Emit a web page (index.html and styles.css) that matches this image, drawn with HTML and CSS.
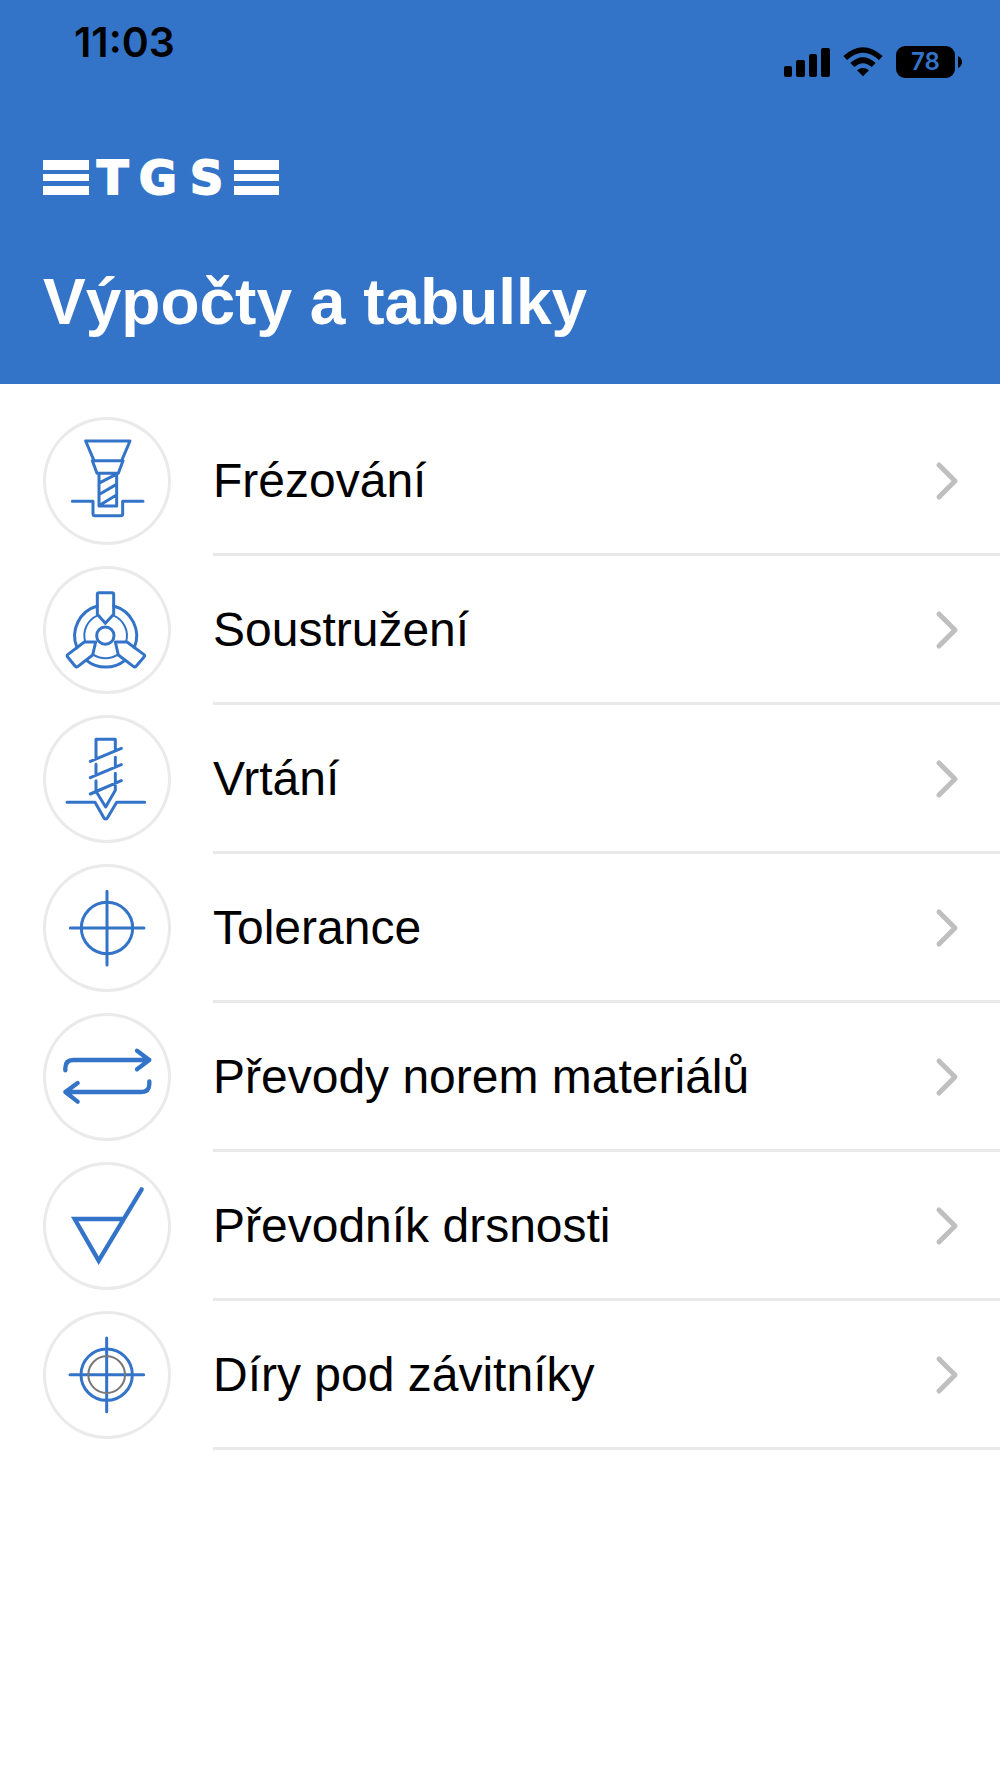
FILE: index.html
```html
<!DOCTYPE html>
<html lang="cs">
<head>
<meta charset="utf-8">
<meta name="viewport" content="width=device-width, initial-scale=1">
<title>Výpočty a tabulky</title>
<link rel="stylesheet" href="styles.css">
</head>
<body>
<header class="header">
  <div class="status">
    <time class="clock">11:03</time>
    <div class="indicators">
      <svg class="signal" viewBox="0 0 46 30" aria-hidden="true">
        <rect x="0" y="19" width="8" height="11" rx="2"/>
        <rect x="12" y="13" width="9" height="17" rx="2"/>
        <rect x="25" y="7" width="8" height="23" rx="2"/>
        <rect x="37" y="1" width="9" height="29" rx="2"/>
      </svg>
      <svg class="wifi" viewBox="0 0 120 90" aria-hidden="true">
        <path d="M1 27Q60 -26 119 27L108 39Q60 -5 12 39Z"/>
        <path d="M22 48Q60 14 98 48L86 60Q60 37 34 60Z"/>
        <path d="M42 70Q60 56 78 70L60 88Z"/>
      </svg>
      <div class="battery"><span class="battery-level">78</span>
        <svg class="battery-tip" viewBox="0 0 4 12" aria-hidden="true"><path d="M0 0Q4 2 4 6T0 12Z"/></svg>
      </div>
    </div>
  </div>
  <svg class="logo" viewBox="0 0 237 36" role="img" aria-label="TGS">
    <path d="M0 0H46V10H0ZM0 14H46V21H0ZM0 26H46V35H0ZM191 0H236V10H191ZM191 14H236V21H191ZM191 26H236V35H191Z"/>
    <text class="logo-text" y="34" x="54 96 147">TGS</text>
  </svg>
  <h1 class="title">Výpočty a tabulky</h1>
</header>
<main>
  <ul class="menu">
    <li><a class="row" href="#frezovani">
      <span class="badge"><svg class="icon" viewBox="21 22 384 384" aria-hidden="true">
        <path d="M149 94H282L257 153H174ZM169 153L183 191H247L261 153M189 191V289H242V191M192 219L240 194M192 253L240 225M192 286L240 257M109 275H171V312Q171 318 177 318H254Q260 318 260 312V275H321"/>
      </svg></span>
      <span class="body"><span class="label">Frézování</span><svg class="chevron" viewBox="0 0 20 36" aria-hidden="true"><path d="M2 2L18 18L2 34"/></svg></span>
    </a></li>
    <li><a class="row" href="#soustruzeni">
      <span class="badge"><svg class="icon" viewBox="21 19 384 384" aria-hidden="true">
        <circle cx="208" cy="228" r="26"/>
        <path d="M189 99H228Q233 99 233 104V164L208 191L184 164V104Q184 99 189 99Z"/>
        <path d="M145 247H179L170 286L126 320Q121 324 117 319L95 292Q91 288 96 284Z"/>
        <path d="M273 247H238L247 286L292 320Q297 324 301 319L324 292Q328 288 323 284Z"/>
        <path d="M184 139A93 93 0 0 0 123 264M233 139A93 93 0 0 1 295 264M151 302A93 93 0 0 0 267 302"/>
        <path class="thin" d="M184 168A65 65 0 0 0 148 247M233 168A65 65 0 0 1 270 247M170 284A70 70 0 0 0 247 284"/>
      </svg></span>
      <span class="body"><span class="label">Soustružení</span><svg class="chevron" viewBox="0 0 20 36" aria-hidden="true"><path d="M2 2L18 18L2 34"/></svg></span>
    </a></li>
    <li><a class="row" href="#vrtani">
      <span class="badge"><svg class="icon" viewBox="21 17 384 384" aria-hidden="true">
        <path d="M180 149V90H238V123M163 156L256 117M180 165V197M238 144V173M163 205L256 166M180 214V246L209 293L238 243V192M163 254L256 214M93 279H177L204 326Q209 332 214 326L242 279H326"/>
      </svg></span>
      <span class="body"><span class="label">Vrtání</span><svg class="chevron" viewBox="0 0 20 36" aria-hidden="true"><path d="M2 2L18 18L2 34"/></svg></span>
    </a></li>
    <li><a class="row" href="#tolerance">
      <span class="badge"><svg class="icon" viewBox="21 15 384 384" aria-hidden="true">
        <circle cx="213" cy="207" r="77"/><path d="M103 207H324M213 97V318"/>
      </svg></span>
      <span class="body"><span class="label">Tolerance</span><svg class="chevron" viewBox="0 0 20 36" aria-hidden="true"><path d="M2 2L18 18L2 34"/></svg></span>
    </a></li>
    <li><a class="row" href="#prevody">
      <span class="badge"><svg class="icon bold" viewBox="21 13 384 384" aria-hidden="true">
        <path d="M88 185V178Q88 154 112 154H340M303 126L340 154L303 182M340 218V226Q340 250 316 250H88M125 223L88 250L125 279"/>
      </svg></span>
      <span class="body"><span class="label">Převody norem materiálů</span><svg class="chevron" viewBox="0 0 20 36" aria-hidden="true"><path d="M2 2L18 18L2 34"/></svg></span>
    </a></li>
    <li><a class="row" href="#drsnost">
      <span class="badge"><svg class="icon bold miter" viewBox="21 11 384 384" aria-hidden="true">
        <path d="M317 93L188 307L116 182H262"/>
      </svg></span>
      <span class="body"><span class="label">Převodník drsnosti</span><svg class="chevron" viewBox="0 0 20 36" aria-hidden="true"><path d="M2 2L18 18L2 34"/></svg></span>
    </a></li>
    <li><a class="row" href="#zavitniky">
      <span class="badge"><svg class="icon" viewBox="21 9 384 384" aria-hidden="true">
        <circle cx="212" cy="200" r="77"/><path d="M102 200H323M212 90V311"/><circle class="inner" cx="212" cy="200" r="55"/>
      </svg></span>
      <span class="body"><span class="label">Díry pod závitníky</span><svg class="chevron" viewBox="0 0 20 36" aria-hidden="true"><path d="M2 2L18 18L2 34"/></svg></span>
    </a></li>
  </ul>
</main>
</body>
</html>
```
FILE: styles.css
```css
* { box-sizing: border-box; }

body {
  margin: 0;
  background: #fff;
  color: #000;
  font-family: "Liberation Sans", Arial, sans-serif;
}

.header {
  background: #3374c9;
  padding: 18px 38px 44px 43px;
}

.status {
  display: flex;
  justify-content: space-between;
  padding-left: 31px;
}

.clock {
  font: 600 41px/48px Inter, sans-serif;
}

.indicators {
  display: flex;
  align-items: center;
  gap: 13px;
  padding-top: 28px;
}

.signal { width: 46px; height: 30px; }
.wifi { width: 40px; height: 30px; }

.battery {
  display: flex;
  align-items: center;
  gap: 3px;
}

.battery-level {
  width: 59px;
  border-radius: 9px;
  background: #000;
  color: #3374c9;
  font: 600 24px/32px Inter, sans-serif;
  text-align: center;
}

.battery-tip { width: 4px; height: 12px; }

.logo {
  display: block;
  width: 237px;
  height: 36px;
  margin-top: 82px;
  overflow: visible;
  fill: #fff;
}

.logo-text {
  font: bold 46px "DejaVu Sans", sans-serif;
  stroke: #fff;
  stroke-width: 2px;
}

.title {
  margin: 68px 0 0;
  color: #fff;
  font-size: 64px;
  font-weight: 700;
  line-height: 76px;
}

.menu {
  list-style: none;
  margin: 0;
  padding: 23px 0 0;
}

.row {
  display: flex;
  align-items: stretch;
  gap: 42px;
  height: 149px;
  padding-left: 43px;
  color: inherit;
  text-decoration: none;
}

.badge {
  flex: none;
  width: 128px;
  height: 128px;
  margin-top: 10px;
  border-radius: 50%;
  box-shadow: inset 0 0 0 3px #eaeaea;
}

.icon {
  display: block;
  width: 100%;
  height: 100%;
  fill: none;
  stroke: #3374c9;
  stroke-width: 9;
  stroke-linecap: round;
  stroke-linejoin: round;
}

.bold { stroke-width: 13; }
.miter { stroke-linejoin: miter; }
.thin { stroke-width: 6; }
.inner { stroke: #777; stroke-width: 6; }

.body {
  flex: 1;
  display: flex;
  align-items: center;
  justify-content: space-between;
  padding: 2px 43px 0 0;
  border-bottom: 3px solid #e9e9e9;
}

.label {
  font-size: 48px;
  line-height: 56px;
}

.chevron {
  width: 20px;
  height: 36px;
  overflow: visible;
  fill: none;
  stroke: #bfbfbf;
  stroke-width: 5;
  stroke-linecap: round;
  stroke-linejoin: round;
}
```
